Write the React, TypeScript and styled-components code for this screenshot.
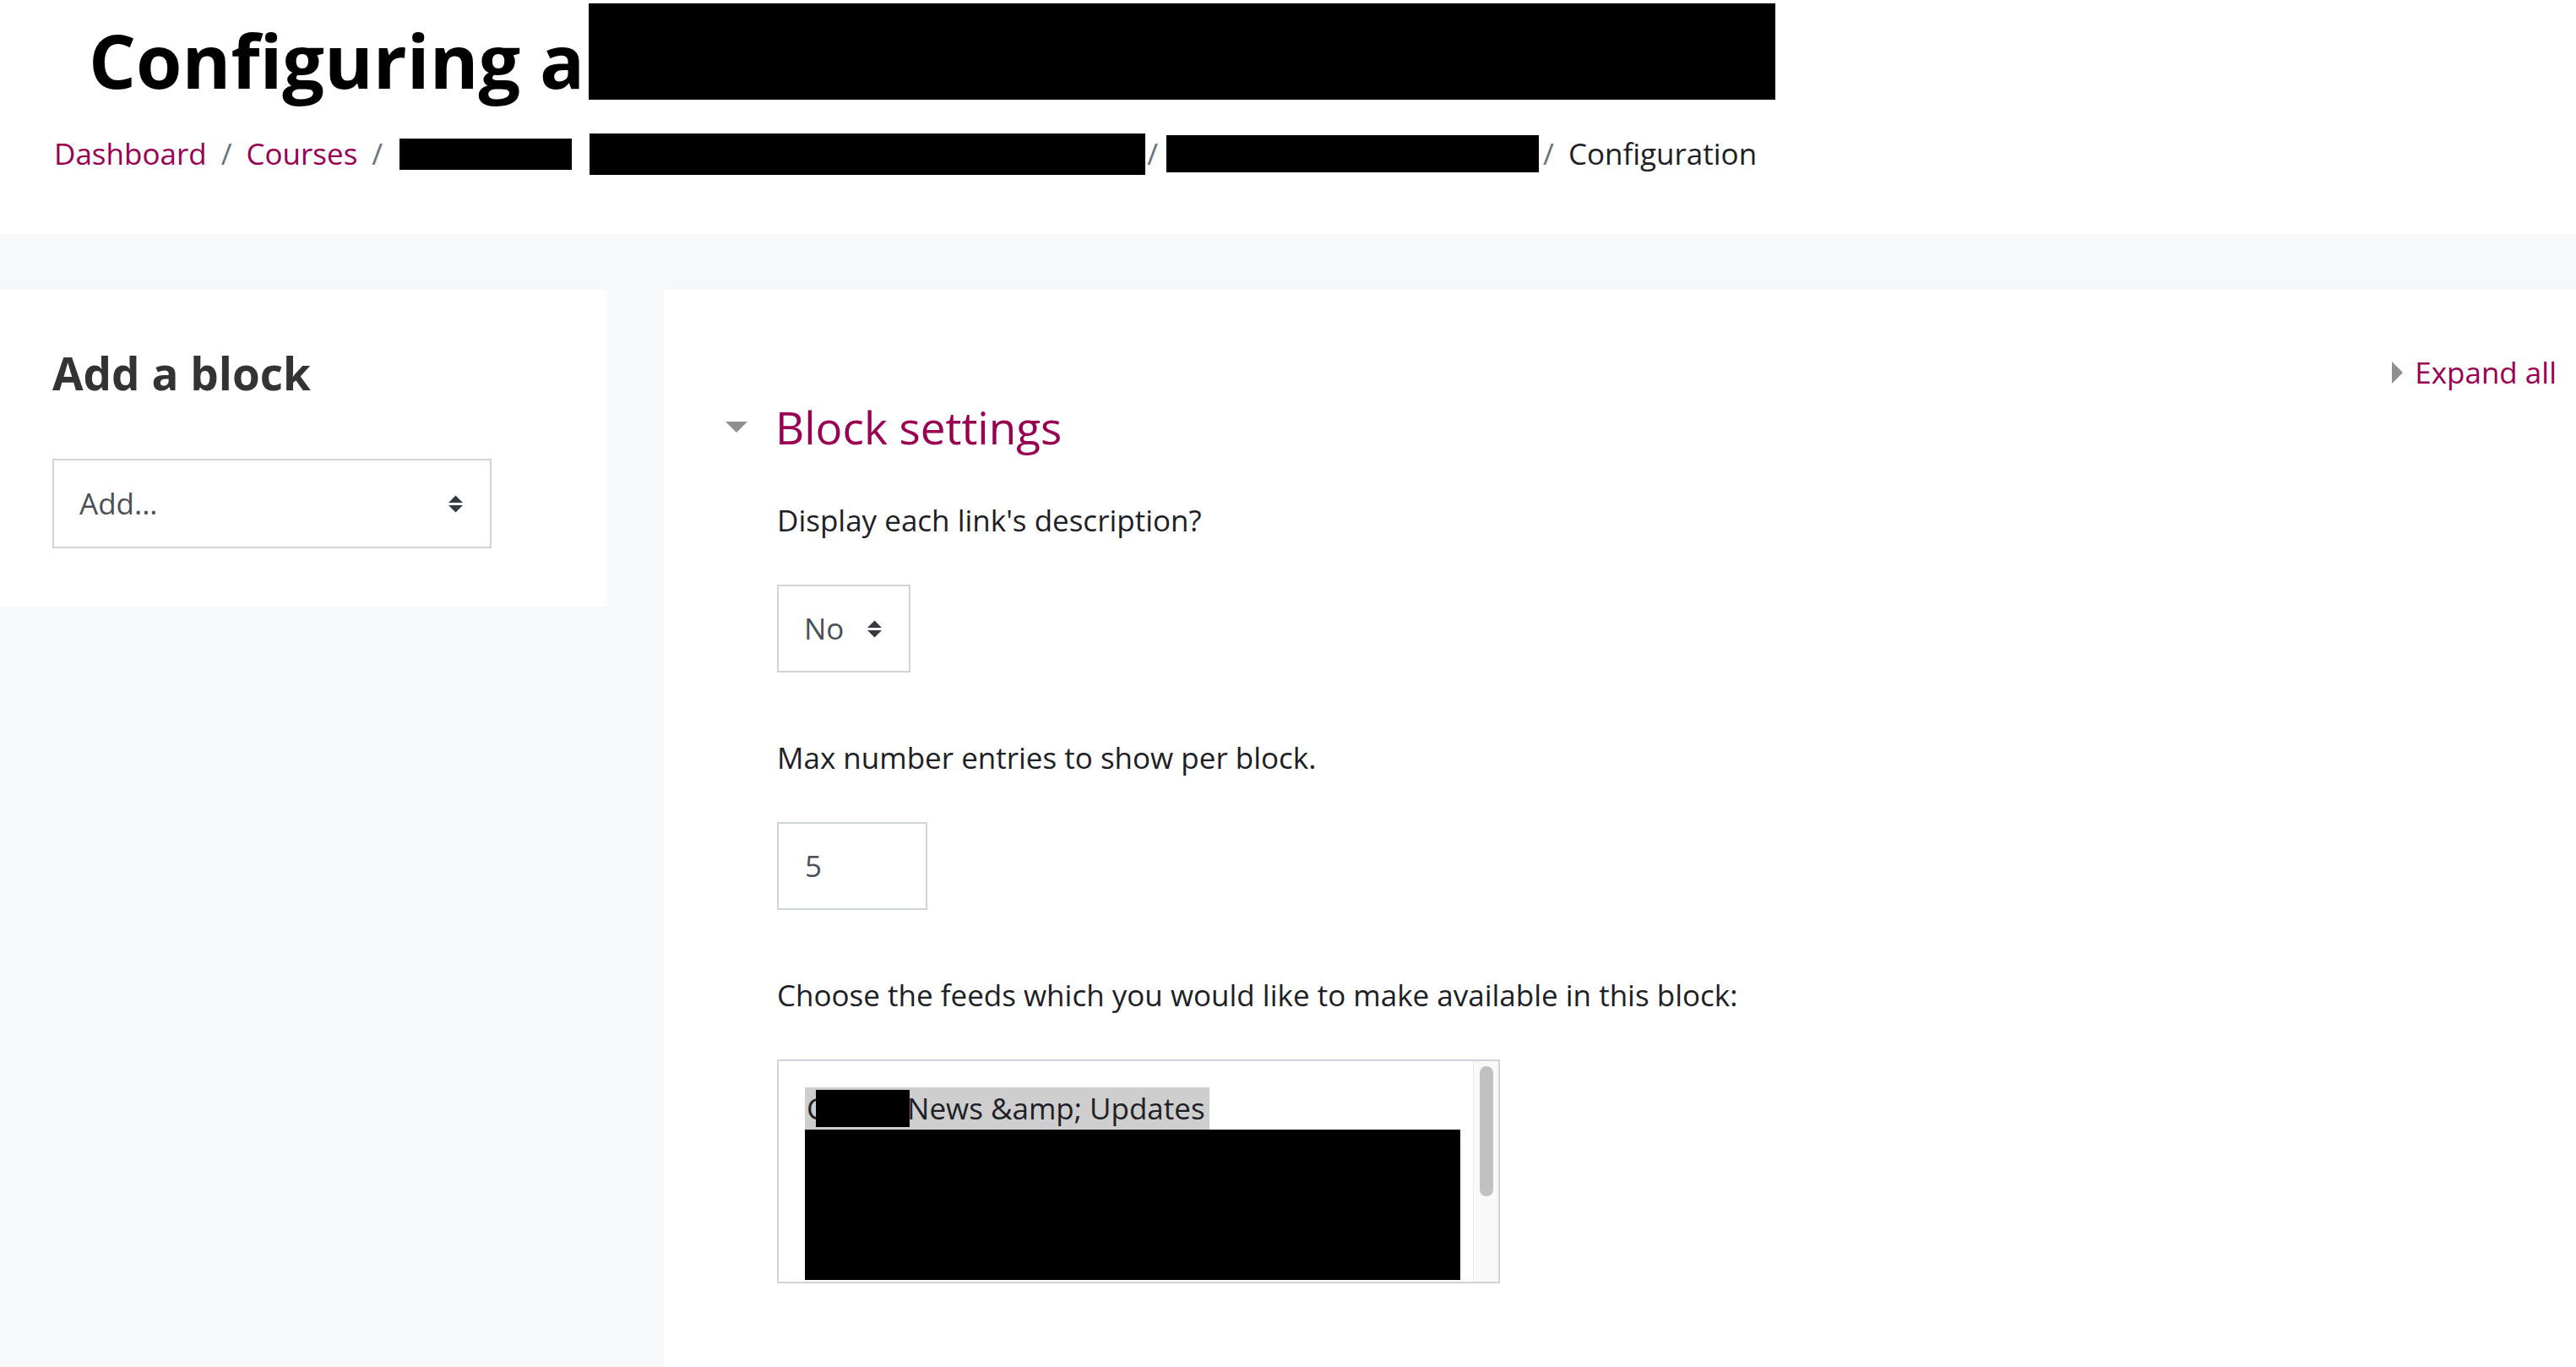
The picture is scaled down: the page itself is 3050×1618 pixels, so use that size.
import React from "react";
import styled, { createGlobalStyle } from "styled-components";

const GlobalStyle = createGlobalStyle`
  html, body {
    margin: 0;
    padding: 0;
  }
  body {
    background: #f7f8fa;
    font-family: "Open Sans", "Liberation Sans", sans-serif;
    font-size: 35px;
    line-height: 50px;
    color: #1d2125;
  }
`;

const App = () => {
  return (
    <>
      <GlobalStyle />
      <PageHeader>
        <Title>
          <span>Configuring a</span>
          <Redacted $w={1405} $h={114} $mt={-13} $ml={5} />
        </Title>
        <Breadcrumb>
          <Crumb href="#">Dashboard</Crumb>
          <Sep>/</Sep>
          <Crumb href="#">Courses</Crumb>
          <Sep>/</Sep>
          <Redacted $w={204} $h={37} $ml={3} />
          <Redacted $w={658} $h={49} $ml={21} $mr={-15} />
          <Sep>/</Sep>
          <Redacted $w={441} $h={44} $ml={-7} $mr={-12} />
          <Sep>/</Sep>
          <Current>Configuration</Current>
        </Breadcrumb>
      </PageHeader>

      <PageBody>
        <BlockCard>
          <CardTitle>Add a block</CardTitle>
          <SelectBox $w={520} $h={106}>
            <span>Add...</span>
            <SortArrows />
          </SelectBox>
        </BlockCard>

        <MainRegion>
          <ExpandRow>
            <Caret $dir="right" />
            <Crumb href="#">Expand all</Crumb>
          </ExpandRow>
          <Legend>
            <Caret $dir="down" />
            <LegendText>Block settings</LegendText>
          </Legend>

          <FormArea>
            <Field>
              <FieldLabel>Display each link's description?</FieldLabel>
              <SelectBox $w={158} $h={104}>
                <span>No</span>
                <SortArrows />
              </SelectBox>
            </Field>

            <Field>
              <FieldLabel>Max number entries to show per block.</FieldLabel>
              <TextInput $w={178}>5</TextInput>
            </Field>

            <Field>
              <FieldLabel>Choose the feeds which you would like to make available in this block:</FieldLabel>
              <ListBox>
                <ListContent>
                  <ListOption $selected>
                    C
                    <Redacted $w={111} $h={44} $ml={-11} $mr={-3} />
                    {"News &amp; Updates"}
                  </ListOption>
                  <Redacted $w={776} $h={178} />
                </ListContent>
                <ScrollTrack>
                  <ScrollThumb />
                </ScrollTrack>
              </ListBox>
            </Field>
          </FormArea>
        </MainRegion>
      </PageBody>
    </>
  );
};

export default App;

const SortArrows = () => (
  <ArrowIcon width="19" height="21" viewBox="0 0 19 21">
    <polygon points="1,9 9.5,0.5 18,9" />
    <polygon points="1,12 18,12 9.5,20.5" />
  </ArrowIcon>
);

const Caret = ({ $dir }: { $dir: "right" | "down" }) =>
  $dir === "right" ? (
    <CaretIcon width="13" height="26" viewBox="0 0 13 26">
      <polygon points="0,0 13,13 0,26" />
    </CaretIcon>
  ) : (
    <CaretIcon width="26" height="13" viewBox="0 0 26 13">
      <polygon points="0,0 26,0 13,13" />
    </CaretIcon>
  );

const PageHeader = styled.header`
  background: #fff;
  padding: 17px 0 70px 59px;
`;

const Title = styled.h1`
  display: flex;
  align-items: flex-start;
  margin: 0 0 32px 0;
  padding-left: 46px;
  font-size: 88px;
  font-weight: 700;
  line-height: 108px;
  color: #000;
`;

const Redacted = styled.span<{ $w: number; $h: number; $mt?: number; $ml?: number; $mr?: number }>`
  display: block;
  flex: none;
  width: ${p => p.$w}px;
  height: ${p => p.$h}px;
  margin: ${p => `${p.$mt ?? 0}px ${p.$mr ?? 0}px 0 ${p.$ml ?? 0}px`};
  background: #000;
  position: relative;
`;

const Breadcrumb = styled.nav`
  display: flex;
  align-items: center;
  height: 50px;
  margin-left: 5px;
`;

const Crumb = styled.a`
  color: #990052;
  text-decoration: none;
`;

const Sep = styled.span`
  color: #6a737b;
  padding: 0 17px;
`;

const Current = styled.span`
  color: #1d2125;
`;

const PageBody = styled.div`
  display: grid;
  grid-template-columns: 719px 1fr;
  column-gap: 67px;
  align-items: start;
  padding-top: 66px;
`;

const BlockCard = styled.aside`
  background: #fff;
  padding: 67px 62px 69px;
`;

const CardTitle = styled.h2`
  margin: 0 0 69px 0;
  font-size: 53px;
  font-weight: 700;
  line-height: 64px;
  color: #333;
`;

const SelectBox = styled.div<{ $w: number; $h: number }>`
  box-sizing: border-box;
  display: flex;
  align-items: center;
  justify-content: space-between;
  width: ${p => p.$w}px;
  height: ${p => p.$h}px;
  padding: 0 31px 0 30px;
  border: 2px solid #ced4da;
  background: #fff;
  color: #495057;
`;

const ArrowIcon = styled.svg`
  flex: none;
  fill: #343a40;
`;

const CaretIcon = styled.svg`
  flex: none;
  fill: #8f8f8f;
`;

const MainRegion = styled.main`
  background: #fff;
  min-height: 1276px;
  padding: 73px 23px 0 73px;
`;

const ExpandRow = styled.div`
  display: flex;
  justify-content: flex-end;
  align-items: center;
  gap: 14px;
`;

const Legend = styled.div`
  display: flex;
  align-items: center;
  gap: 33px;
  margin: 7px 0 53px 0;
`;

const LegendText = styled.span`
  font-size: 53px;
  line-height: 65px;
  color: #990052;
`;

const FormArea = styled.div`
  margin-left: 61px;
`;

const Field = styled.div`
  display: flex;
  flex-direction: column;
  align-items: flex-start;
  gap: 51px;
  margin-bottom: 76px;
`;

const FieldLabel = styled.label`
  color: #1d2125;
`;

const TextInput = styled.div<{ $w: number }>`
  box-sizing: border-box;
  display: flex;
  align-items: center;
  width: ${p => p.$w}px;
  height: 104px;
  padding-left: 31px;
  border: 2px solid #ced4da;
  color: #495057;
`;

const ListBox = styled.div`
  box-sizing: border-box;
  display: flex;
  width: 856px;
  height: 265px;
  border: 2px solid #ced4da;
  overflow: hidden;
`;

const ListContent = styled.div`
  flex: 1;
  overflow: hidden;
  padding: 31px 0 0 31px;
`;

const ScrollTrack = styled.div`
  box-sizing: border-box;
  flex: none;
  width: 30px;
  padding: 6px 6px 0 7px;
  background: #f9f9f9;
  border-left: 1px solid #e6e6e6;
`;

const ScrollThumb = styled.div`
  height: 154px;
  border-radius: 8px;
  background: #c1c1c1;
`;

const ListOption = styled.div<{ $selected?: boolean }>`
  display: flex;
  align-items: center;
  width: fit-content;
  height: 50px;
  padding: 0 5px 0 2px;
  background: ${p => (p.$selected ? "#cecece" : "transparent")};
  color: #1d2125;
`;
